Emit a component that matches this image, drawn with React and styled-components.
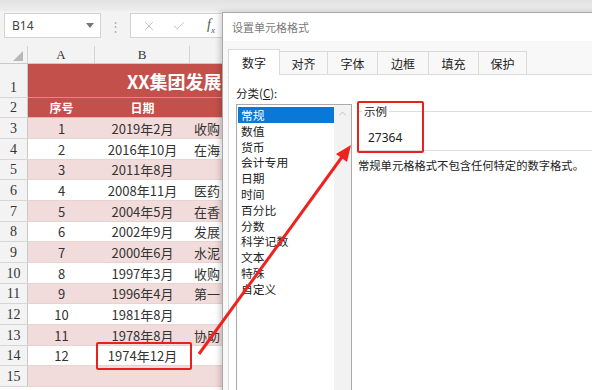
import React from "react";
import styled, { createGlobalStyle } from "styled-components";
import { X, Check, ChevronUp } from "lucide-react";

const GlobalStyle = createGlobalStyle`
  * { box-sizing: border-box; }
  body {
    margin: 0;
    background: #fff;
    font-family: "Noto Sans CJK SC", "Noto Sans", sans-serif;
  }
`;

const rows = [
  { n: 3, a: "1", b: "2019年2月", c: "收购", h: 21 },
  { n: 4, a: "2", b: "2016年10月", c: "在海", h: 21 },
  { n: 5, a: "3", b: "2011年8月", c: "", h: 20 },
  { n: 6, a: "4", b: "2008年11月", c: "医药", h: 21 },
  { n: 7, a: "5", b: "2004年5月", c: "在香", h: 21 },
  { n: 8, a: "6", b: "2002年9月", c: "发展", h: 20 },
  { n: 9, a: "7", b: "2000年6月", c: "水泥", h: 21 },
  { n: 10, a: "8", b: "1997年3月", c: "收购", h: 21 },
  { n: 11, a: "9", b: "1996年4月", c: "第一", h: 20 },
  { n: 12, a: "10", b: "1981年8月", c: "", h: 21 },
  { n: 13, a: "11", b: "1978年8月", c: "协助", h: 21 },
  { n: 14, a: "12", b: "1974年12月", c: "", h: 20 },
  { n: 15, a: "", b: "", c: "", h: 21 },
];

const tabs = [
  { label: "数字", w: 52 },
  { label: "对齐", w: 49 },
  { label: "字体", w: 51 },
  { label: "边框", w: 52 },
  { label: "填充", w: 51 },
  { label: "保护", w: 49 },
];

const categories = [
  "常规", "数值", "货币", "会计专用", "日期", "时间",
  "百分比", "分数", "科学记数", "文本", "特殊", "自定义",
];

const App = () => {
  return (
    <Screen>
      <GlobalStyle />
      <FormulaBar>
        <NameBox>
          <span>B14</span>
          <svg width="8" height="5" viewBox="0 0 8 5">
            <path d="M0 0 L8 0 L4 5 Z" fill="#777" />
          </svg>
        </NameBox>
        <Dots>⋮</Dots>
        <FxBox>
          <X size={14} strokeWidth={1.4} color="#b4b4b4" />
          <Check size={14} strokeWidth={1.4} color="#b4b4b4" />
          <Fx>
            f<sub>x</sub>
          </Fx>
        </FxBox>
      </FormulaBar>

      <Sheet>
        <HeaderRow>
          <Corner>
            <svg width="10" height="10" viewBox="0 0 10 10">
              <path d="M10 0 L10 10 L0 10 Z" fill="#b8b8b8" />
            </svg>
          </Corner>
          <ColHead $w={67}>A</ColHead>
          <ColHead $w={95}>B</ColHead>
          <ColHead $w={0}></ColHead>
        </HeaderRow>

        <SheetRow $h={34} $bg="#c4504c" $line="#d88a87">
          <RowHead>1</RowHead>
          <TitleCell>XX集团发展</TitleCell>
        </SheetRow>

        <SheetRow $h={20} $bg="#c4504c" $line="#e2b4b2">
          <RowHead>2</RowHead>
          <Cell $w={67} $head>序号</Cell>
          <Cell $w={95} $head>日期</Cell>
          <Cell $w={0} $head></Cell>
        </SheetRow>

        {rows.map((r, i) => (
          <SheetRow key={r.n} $h={r.h} $bg={i % 2 === 0 ? "#f2dcdb" : "#ffffff"} $line="#e6d3d2">
            <RowHead>{r.n}</RowHead>
            <Cell $w={67}>{r.a}</Cell>
            <Cell $w={95}>{r.b}</Cell>
            <Cell $w={0} $left>{r.c}</Cell>
          </SheetRow>
        ))}
      </Sheet>

      <Dialog>
        <TitleBar>设置单元格格式</TitleBar>
        <DialogBody>
          <TabStrip>
            {tabs.map((t, i) => (
              <Tab key={t.label} $w={t.w} $active={i === 0}>
                {t.label}
              </Tab>
            ))}
          </TabStrip>
          <Panel>
            <LeftCol>
              <FieldLabel>
                分类(<u>C</u>):
              </FieldLabel>
              <ListBox>
                <Items>
                  {categories.map((c, i) => (
                    <Item key={c} $selected={i === 0}>
                      {c}
                    </Item>
                  ))}
                </Items>
                <ScrollTrack>
                  <ChevronUp size={11} strokeWidth={1.5} color="#a8a8a8" />
                </ScrollTrack>
              </ListBox>
            </LeftCol>
            <RightCol>
              <SampleGroup>
                <legend>示例</legend>
                <SampleValue>27364</SampleValue>
              </SampleGroup>
              <Description>常规单元格格式不包含任何特定的数字格式。</Description>
            </RightCol>
          </Panel>
        </DialogBody>
      </Dialog>

      <Highlight $x={357} $y={101} $w={67} $h={52} />
      <Highlight $x={96} $y={342} $w={96} $h={28} />

      <Arrow width="592" height="390" viewBox="0 0 592 390">
        <line x1="199" y1="354" x2="342" y2="157" stroke="#ee2320" strokeWidth="3" />
        <polygon points="351,145 347,162 336,154" fill="#ee2320" />
      </Arrow>
    </Screen>
  );
};

const Screen = styled.div`
  position: relative;
  width: 592px;
  height: 390px;
  overflow: hidden;
  background: #fff;
`;

const FormulaBar = styled.div`
  height: 46px;
  padding-top: 13px;
  display: flex;
  align-items: flex-start;
  background: linear-gradient(#e2e2e2 0, #ececec 10px, #f3f3f3 12px);
`;

const NameBox = styled.div`
  margin-left: 4px;
  width: 97px;
  height: 25px;
  padding: 0 6px 0 7px;
  display: flex;
  align-items: center;
  justify-content: space-between;
  background: #fff;
  border: 1px solid #d4d4d4;
  font-family: "Noto Sans", sans-serif;
  font-size: 12px;
  color: #444;
`;

const Dots = styled.div`
  width: 29px;
  height: 25px;
  display: flex;
  align-items: center;
  justify-content: center;
  color: #b0b0b0;
  font-size: 13px;
`;

const FxBox = styled.div`
  flex: 1;
  height: 25px;
  padding-left: 11px;
  display: flex;
  align-items: center;
  gap: 16px;
  background: #fff;
  border: 1px solid #d4d4d4;
`;

const Fx = styled.span`
  margin-left: 5px;
  font-family: "Liberation Serif", serif;
  font-style: italic;
  font-size: 14px;
  color: #555;
  sub {
    font-size: 9px;
  }
`;

const Sheet = styled.div`
  display: flex;
  flex-direction: column;
`;

const HeaderRow = styled.div`
  display: flex;
  height: 18px;
  background: #f3f3f3;
  border-bottom: 1px solid #c9c9c9;
`;

const Corner = styled.div`
  width: 28px;
  display: flex;
  align-items: flex-end;
  justify-content: flex-end;
  padding: 0 4px 2px 0;
  border-right: 1px solid #d3d3d3;
`;

const ColHead = styled.div`
  ${(p) => (p.$w ? `width: ${p.$w}px;` : "flex: 1;")}
  display: flex;
  align-items: center;
  justify-content: center;
  border-right: 1px solid #d3d3d3;
  font-family: "Liberation Serif", serif;
  font-size: 13px;
  color: #333;
`;

const SheetRow = styled.div`
  display: flex;
  flex-shrink: 0;
  height: ${(p) => p.$h}px;
  background: ${(p) => p.$bg};
  border-bottom: 1px solid ${(p) => p.$line};
`;

const RowHead = styled.div`
  width: 28px;
  flex-shrink: 0;
  display: flex;
  align-items: flex-end;
  justify-content: center;
  background: #f3f3f3;
  border-right: 1px solid #c9c9c9;
  box-shadow: 0 1px 0 #d6d6d6;
  font-family: "Liberation Serif", serif;
  font-size: 14px;
  line-height: 18px;
  color: #333;
`;

const TitleCell = styled.div`
  flex: 1;
  padding-left: 99px;
  display: flex;
  align-items: center;
  color: #fff;
  font-weight: 700;
  font-size: 18px;
  white-space: nowrap;
`;

const Cell = styled.div`
  ${(p) => (p.$w ? `width: ${p.$w}px;` : "flex: 1;")}
  display: flex;
  align-items: center;
  justify-content: ${(p) => (p.$left ? "flex-start" : "center")};
  padding-left: ${(p) => (p.$left ? "4px" : "0")};
  font-size: ${(p) => (p.$head ? "12px" : "13px")};
  font-weight: ${(p) => (p.$head ? 700 : 400)};
  color: ${(p) => (p.$head ? "#fff" : "#333")};
  white-space: nowrap;
`;

const Dialog = styled.div`
  position: absolute;
  left: 222px;
  top: 12px;
  width: 380px;
  height: 390px;
  display: flex;
  flex-direction: column;
  background: #fff;
  border: 1px solid #a9a9a9;
  box-shadow: -2px 0 6px rgba(0, 0, 0, 0.2);
`;

const TitleBar = styled.div`
  height: 28px;
  padding-left: 9px;
  display: flex;
  align-items: center;
  font-size: 11px;
  color: #7a7a7a;
  background: #fff;
`;

const DialogBody = styled.div`
  flex: 1;
  padding: 9px 0 0 5px;
  display: flex;
  flex-direction: column;
  background: #f8f8f8;
`;

const TabStrip = styled.div`
  display: flex;
  align-items: flex-end;
  height: 25px;
  position: relative;
  z-index: 1;
  margin-bottom: -1px;
`;

const Tab = styled.div`
  width: ${(p) => p.$w}px;
  height: ${(p) => (p.$active ? 26 : 24)}px;
  margin-right: -1px;
  display: flex;
  align-items: center;
  justify-content: center;
  background: ${(p) => (p.$active ? "#fff" : "#f8f8f8")};
  border: 1px solid #dadada;
  border-bottom: ${(p) => (p.$active ? "1px solid #fff" : "1px solid #dadada")};
  font-size: 12px;
  color: #222;
`;

const Panel = styled.div`
  flex: 1;
  display: flex;
  gap: 6px;
  padding: 10px 0 0 7px;
  background: #fff;
  border: 1px solid #dadada;
`;

const LeftCol = styled.div`
  width: 116px;
  display: flex;
  flex-direction: column;
`;

const FieldLabel = styled.div`
  height: 16px;
  margin-bottom: 3px;
  font-size: 11.5px;
  line-height: 16px;
  color: #222;
  u {
    text-decoration-thickness: 1px;
  }
`;

const ListBox = styled.div`
  flex: 1;
  display: flex;
  border: 1px solid #aaaaaa;
  background: #fff;
`;

const Items = styled.div`
  flex: 1;
  padding: 2px 0 0 1px;
  display: flex;
  flex-direction: column;
`;

const Item = styled.div`
  height: 15.8px;
  padding-left: 3px;
  font-size: 11.8px;
  line-height: 15.8px;
  color: ${(p) => (p.$selected ? "#fff" : "#222")};
  background: ${(p) => (p.$selected ? "#0a78d7" : "transparent")};
  white-space: nowrap;
`;

const ScrollTrack = styled.div`
  width: 17px;
  display: flex;
  justify-content: center;
  padding-top: 3px;
  background: #f2f2f2;
`;

const RightCol = styled.div`
  flex: 1;
  padding-top: 19px;
  display: flex;
  flex-direction: column;
`;

const SampleGroup = styled.fieldset`
  margin: 0;
  height: 47px;
  padding: 0 0 0 9px;
  border: 1px solid #dcdcdc;
  border-right: none;
  legend {
    padding: 0 2px;
    margin-left: -6px;
    font-size: 11.5px;
    line-height: 14px;
    color: #222;
  }
`;

const SampleValue = styled.div`
  margin-top: 11px;
  font-family: "Noto Sans", sans-serif;
  font-size: 12px;
  color: #222;
`;

const Description = styled.div`
  margin-top: 6px;
  font-size: 11.3px;
  line-height: 16px;
  color: #222;
  white-space: nowrap;
`;

const Highlight = styled.div`
  position: absolute;
  left: ${(p) => p.$x}px;
  top: ${(p) => p.$y}px;
  width: ${(p) => p.$w}px;
  height: ${(p) => p.$h}px;
  border: 2px solid #e8211f;
  border-radius: 2px;
  pointer-events: none;
`;

const Arrow = styled.svg`
  position: absolute;
  left: 0;
  top: 0;
  pointer-events: none;
`;

export default App;
